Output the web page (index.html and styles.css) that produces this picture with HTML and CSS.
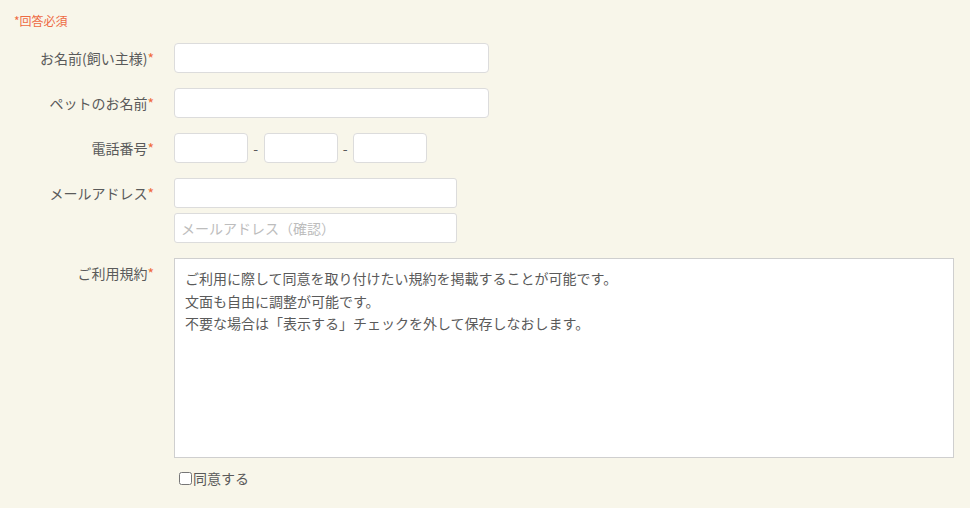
FILE: index.html
```html
<!DOCTYPE html>
<html lang="ja">
<head>
<meta charset="utf-8">
<link rel="stylesheet" href="styles.css">
</head>
<body>
<form class="form">
  <p class="note">*回答必須</p>
  <div class="rows">
    <div class="row">
      <label class="label">お名前(飼い主様)<span class="req">*</span></label>
      <div class="field"><input class="input wide" type="text"></div>
    </div>
    <div class="row">
      <label class="label">ペットのお名前<span class="req">*</span></label>
      <div class="field"><input class="input wide" type="text"></div>
    </div>
    <div class="row">
      <label class="label">電話番号<span class="req">*</span></label>
      <div class="field tel">
        <input class="input short" type="text"><span class="dash">-</span><input class="input short" type="text"><span class="dash">-</span><input class="input short" type="text">
      </div>
    </div>
    <div class="row">
      <label class="label">メールアドレス<span class="req">*</span></label>
      <div class="field stack">
        <input class="input mail" type="text">
        <input class="input mail" type="text" placeholder="メールアドレス（確認）">
      </div>
    </div>
    <div class="row">
      <label class="label">ご利用規約<span class="req">*</span></label>
      <div class="field stack">
        <textarea class="terms" readonly>ご利用に際して同意を取り付けたい規約を掲載することが可能です。
文面も自由に調整が可能です。
不要な場合は「表示する」チェックを外して保存しなおします。</textarea>
        <label class="agree"><input type="checkbox" class="check">同意する</label>
      </div>
    </div>
  </div>
</form>
</body>
</html>
```

FILE: styles.css
```css
html, body {
  margin: 0;
  padding: 0;
  background: #f8f6ea;
}
body {
  font-family: "Noto Sans CJK JP", "Noto Sans", sans-serif;
  color: #5a5a5a;
  font-size: 14px;
}
.form {
  padding: 12px 14px;
  margin: 0;
}
.note {
  margin: 0 0 13px;
  font-size: 12px;
  line-height: 18px;
  color: #ee6a43;
}
.rows {
  display: flex;
  flex-direction: column;
  gap: 15px;
}
.row {
  display: grid;
  grid-template-columns: 140px 1fr;
  column-gap: 20px;
  align-items: start;
}
.label {
  text-align: right;
  line-height: 30px;
  font-size: 14px;
  color: #5a5a5a;
  white-space: nowrap;
}
.req {
  color: #f06a3a;
}
.field {
  display: flex;
}
.stack {
  flex-direction: column;
  gap: 5px;
  align-items: flex-start;
}
.tel {
  align-items: center;
  gap: 5px;
}
.dash {
  width: 5.5px;
  text-align: center;
  line-height: 30px;
  color: #5a5a5a;
}
.input {
  box-sizing: border-box;
  height: 30px;
  border: 1px solid #dcdcdc;
  border-radius: 4px;
  background: #fff;
  padding: 0 6px;
  font-family: inherit;
  font-size: 14px;
  color: #5a5a5a;
  margin: 0;
  outline: none;
}
.input::placeholder {
  color: #bdbdbd;
}
.wide { width: 315px; }
.short { width: 74px; }
.mail { width: 283px; border-radius: 3px; }
.terms {
  box-sizing: border-box;
  width: 780px;
  height: 200px;
  margin: 0;
  padding: 8px 10px;
  border: 1px solid #cfcfcf;
  border-radius: 0;
  background: #fff;
  font-family: inherit;
  font-size: 14px;
  line-height: 22.5px;
  color: #5a5a5a;
  resize: none;
  outline: none;
}
.agree {
  display: flex;
  align-items: center;
  margin-top: 4px;
  line-height: 22px;
  font-size: 14px;
  color: #5a5a5a;
}
.check {
  width: 13px;
  height: 13px;
  margin: 0 1px 0 5px;
}
```
